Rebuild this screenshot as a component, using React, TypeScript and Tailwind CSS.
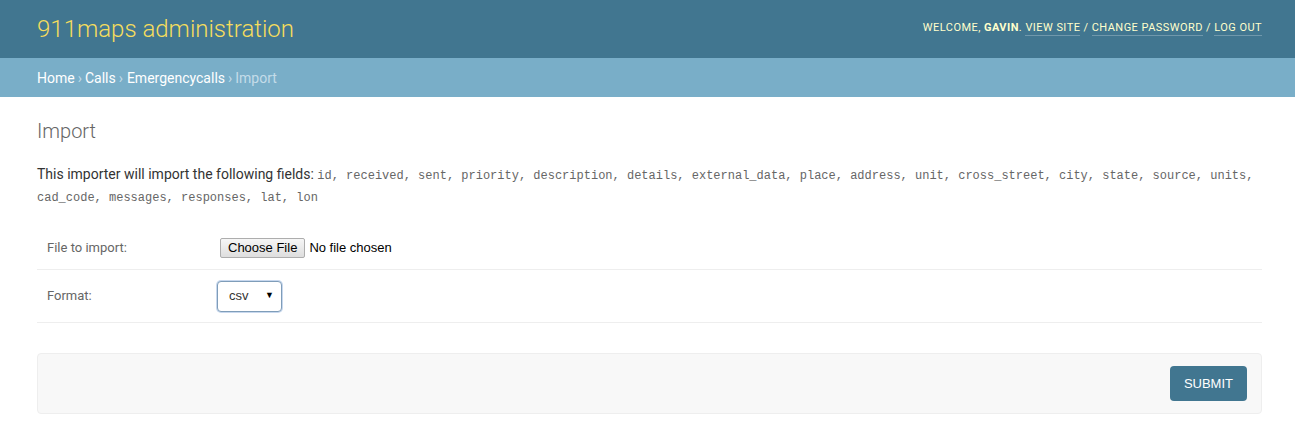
import React from "react";

const fields = [
  "id", "received", "sent", "priority", "description", "details", "external_data", "place",
  "address", "unit", "cross_street", "city", "state", "source", "units", "cad_code",
  "messages", "responses", "lat", "lon",
];

export default function App() {
  return (
    <div className="min-h-[422px] bg-white font-['Roboto','Liberation_Sans',sans-serif] text-[#333]">
      {/* Header */}
      <header className="h-[58px] bg-[#417690] pl-[37px] pr-[33px] flex items-center justify-between">
        <h1 className="text-[24px] font-light text-[#f5dd5d] leading-none -mt-[1px]">911maps administration</h1>
        <div className="text-[11px] uppercase tracking-[0.45px] text-[#ffc] -mt-[2px]">
          Welcome, <strong className="font-bold">Gavin</strong>.{" "}
          <a className="border-b border-white/25 pb-[1px]">View site</a> /{" "}
          <a className="border-b border-white/25 pb-[1px]">Change password</a> /{" "}
          <a className="border-b border-white/25 pb-[1px]">Log out</a>
        </div>
      </header>

      {/* Breadcrumbs */}
      <div className="h-[39px] bg-[#79aec8] pl-[37px] pt-[1px] flex items-center text-[14px] text-[#c4dce8]">
        <a className="text-white">Home</a>
        <span className="ml-[3px] mr-[3px]">›</span>
        <a className="text-white">Calls</a>
        <span className="ml-[3px] mr-[4px]">›</span>
        <a className="text-white">Emergencycalls</a>
        <span className="ml-[3px] mr-[3px]">›</span>
        <span>Import</span>
      </div>

      {/* Content */}
      <main className="pl-[37px] pr-[33px] pt-[20px]">
        <h1 className="text-[20px] font-light text-[#666] leading-[28px]">Import</h1>

        <p className="mt-[18px] text-[14px] leading-[22px]">
          This importer will import the following fields:{" "}
          <code className="font-['Liberation_Mono',monospace] text-[12px] text-[#666] leading-none">
            {fields.join(", ")}
          </code>
        </p>

        <fieldset className="mt-[20px]">
          <div className="flex items-center min-h-[43px] py-[10px] border-b border-[#eee] text-[13px] text-[#666]">
            <label className="w-[183px] pl-[10px]">File to import:</label>
            <div className="flex items-center font-['Liberation_Sans',sans-serif] text-[13px] text-[#000]">
              <span className="h-[20px] px-[7px] flex items-center bg-[#ececec] border border-[#adadad] rounded-[2px] bg-gradient-to-b from-[#f6f6f6] to-[#dedede]">
                Choose File
              </span>
              <span className="ml-[4px]">No file chosen</span>
            </div>
          </div>

          <div className="flex items-center min-h-[53px] py-[10px] border-b border-[#eee] text-[13px] text-[#666]">
            <label className="w-[180px] pl-[10px]">Format:</label>
            <div className="relative">
              <select className="appearance-none w-[65px] h-[31px] pl-[11px] border border-[#7f9db9] rounded-[4px] shadow-[0_0_0_1px_#c8d8ee] text-[13px] text-[#333] bg-white font-['Liberation_Sans',sans-serif] outline-none">
                <option>csv</option>
              </select>
              <span className="absolute right-[8px] top-[8px] text-[9px] text-black pointer-events-none">▼</span>
            </div>
          </div>
        </fieldset>

        <div className="mt-[30px] bg-[#f8f8f8] border border-[#eee] rounded-[4px] px-[14px] py-[12px] flex justify-end">
          <button className="h-[35px] px-[14px] bg-[#417690] text-white text-[13px] uppercase rounded-[4px] font-['Liberation_Sans',sans-serif]">
            Submit
          </button>
        </div>
      </main>
    </div>
  );
}
